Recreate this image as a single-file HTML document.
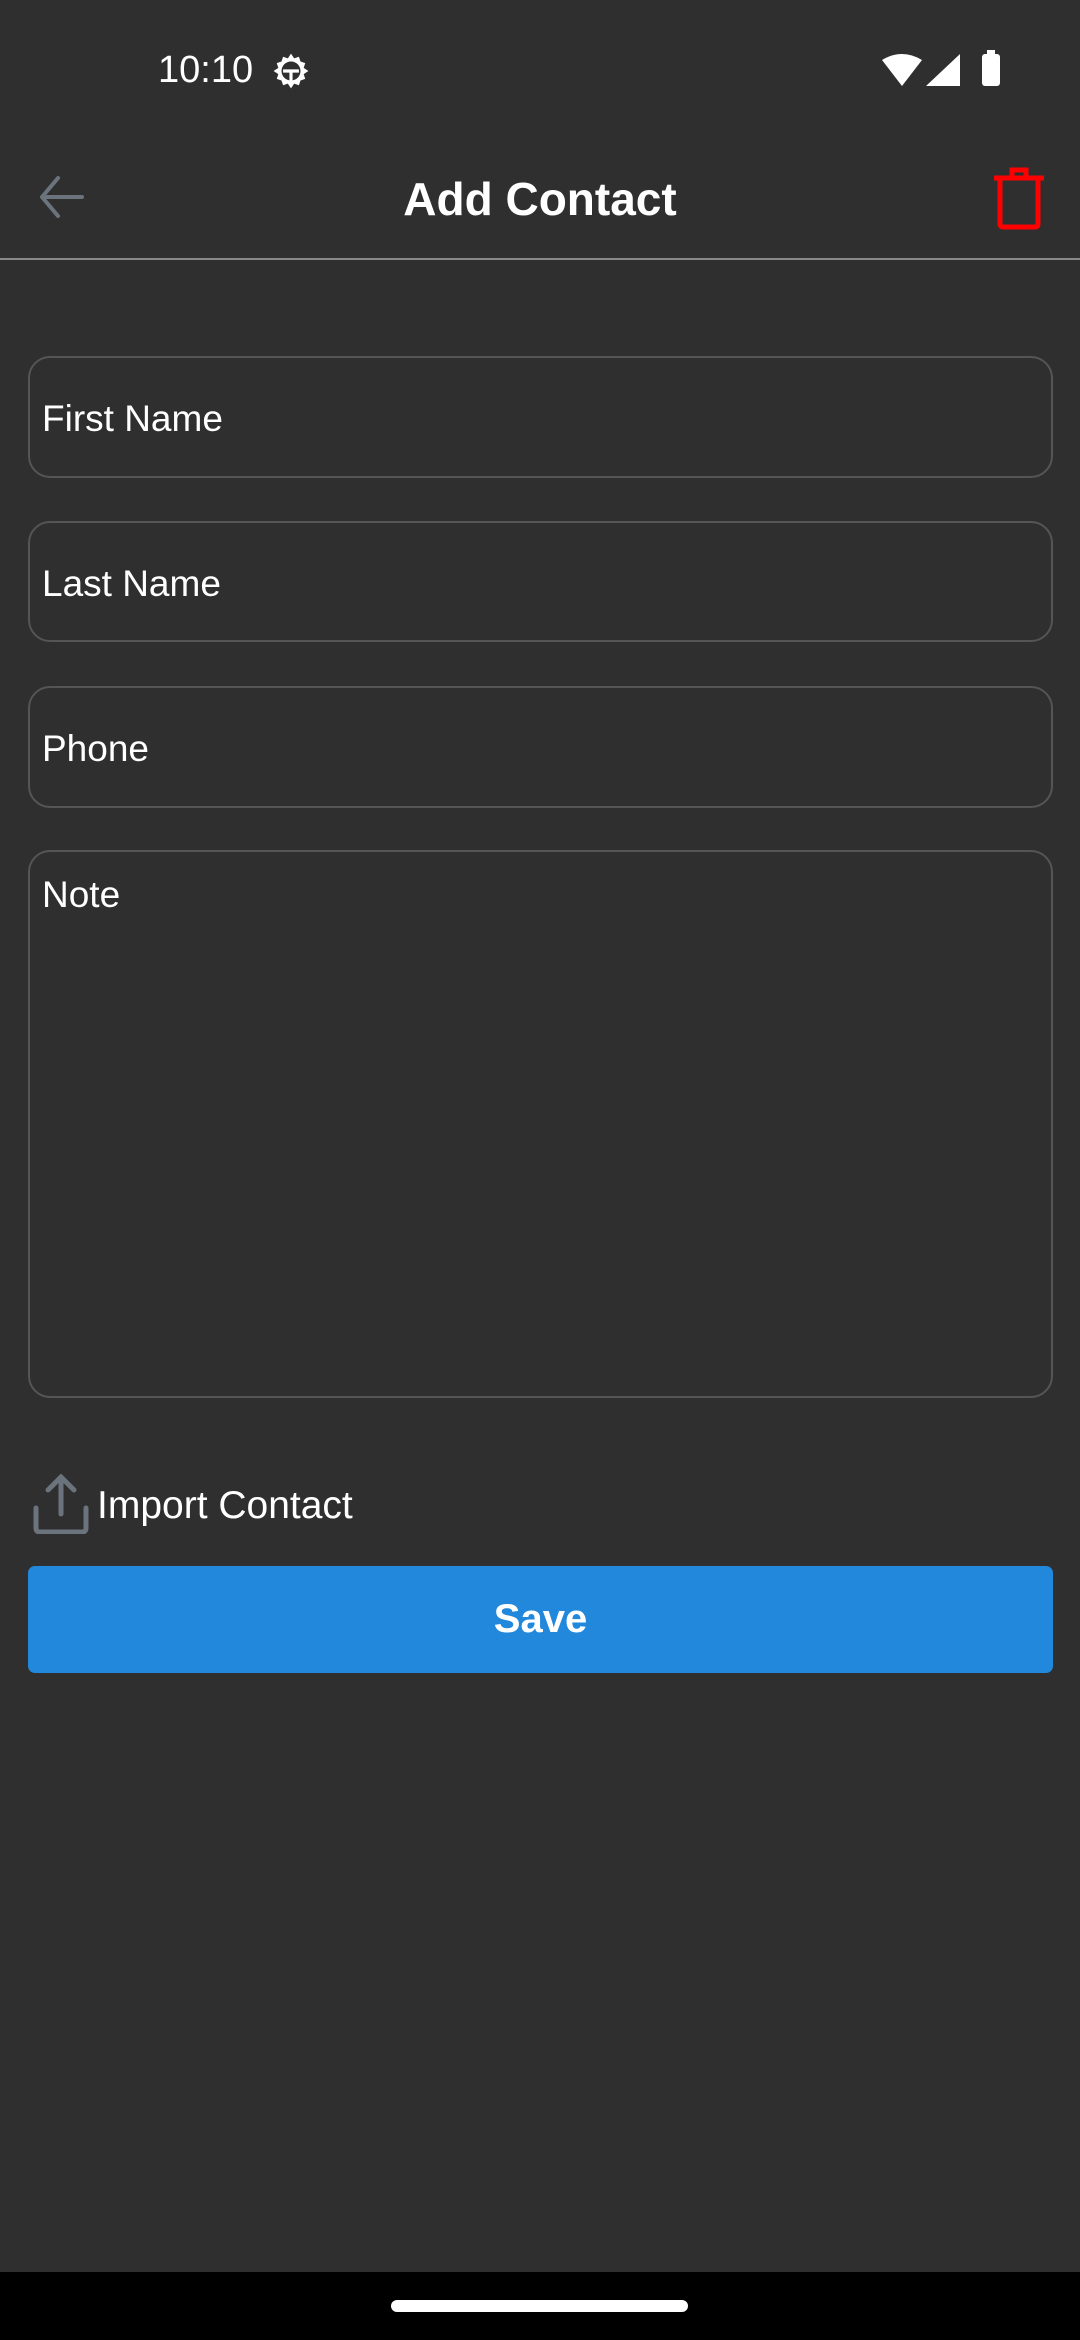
<!DOCTYPE html>
<html><head><meta charset="utf-8"><style>
body{margin:0;width:1080px;height:2340px;background:#2f2f2f;position:relative;overflow:hidden;font-family:"Liberation Sans",sans-serif;color:#fff}
.a{position:absolute}
.f{position:absolute;left:28px;width:1025px;border:2px solid #555;border-radius:22px;box-sizing:border-box}
.f span{position:absolute;left:12px;font-size:37px}
</style></head><body>
<div class="a" style="left:158px;top:48px;font-size:38px;line-height:44px">10:10</div>
<svg class="a" style="left:272px;top:52px" width="38" height="38" viewBox="0 0 24 24"><path fill="#fff" d="M12 1l2 3 3-1 1 3 3 1-1 3 3 2-3 2 1 3-3 1-1 3-3-1-2 3-2-3-3 1-1-3-3-1 1-3-3-2 3-2-1-3 3-1 1-3 3 1z"/><circle cx="12" cy="12" r="6" fill="#2f2f2f"/><path d="M7 12h10M12 12v6M9 9h.01M15 9h.01" stroke="#fff" stroke-width="2"/></svg>
<svg class="a" style="left:882px;top:54px" width="40" height="32" viewBox="0 0 40 32"><path d="M0 6Q20-6 40 6L20 32z" fill="#fff"/></svg>
<svg class="a" style="left:926px;top:54px" width="36" height="32"><path d="M34 0V32H0z" fill="#fff"/></svg>
<div class="a" style="left:982px;top:54px;width:18px;height:32px;background:#fff;border-radius:3px"></div>
<div class="a" style="left:987px;top:50px;width:8px;height:5px;background:#fff"></div>
<svg class="a" style="left:36px;top:174px" width="50" height="46" viewBox="0 0 50 46"><path d="M46 23H6M22 4L6 23l16 19" stroke="#6b737c" stroke-width="4" fill="none" stroke-linecap="round" stroke-linejoin="round"/></svg>
<div class="a" style="left:0;width:1080px;top:171px;text-align:center;font-size:46px;font-weight:bold;line-height:56px">Add Contact</div>
<svg class="a" style="left:990px;top:164px" width="58" height="66" viewBox="0 0 58 66"><path d="M4 14H54M22 13V6h14v7M10 15V60q0 3 3 3H45q3 0 3-3V15" stroke="#f00" stroke-width="5" fill="none"/></svg>
<div class="a" style="left:0;top:258px;width:1080px;height:2px;background:#888"></div>
<div class="f" style="top:356px;height:122px"><span style="top:40px">First Name</span></div>
<div class="f" style="top:521px;height:121px"><span style="top:40px">Last Name</span></div>
<div class="f" style="top:686px;height:122px"><span style="top:40px">Phone</span></div>
<div class="f" style="top:850px;height:548px"><span style="top:22px">Note</span></div>
<svg class="a" style="left:32px;top:1474px" width="62" height="60" viewBox="0 0 62 60"><path d="M29 4V40M16 16L29 3l13 13M4 34V54q0 4 4 4H50q4 0 4-4V34" stroke="#6b737c" stroke-width="5" fill="none" stroke-linecap="round"/></svg>
<div class="a" style="left:97px;top:1484px;font-size:39px">Import Contact</div>
<div class="a" style="left:28px;top:1566px;width:1025px;height:107px;background:#2188db;border-radius:7px;text-align:center;line-height:107px;font-size:40px;font-weight:bold">Save</div>
<div class="a" style="left:0;top:2272px;width:1080px;height:68px;background:#000"></div>
<div class="a" style="left:391px;top:2300px;width:297px;height:12px;background:#fff;border-radius:6px"></div>
</body></html>
